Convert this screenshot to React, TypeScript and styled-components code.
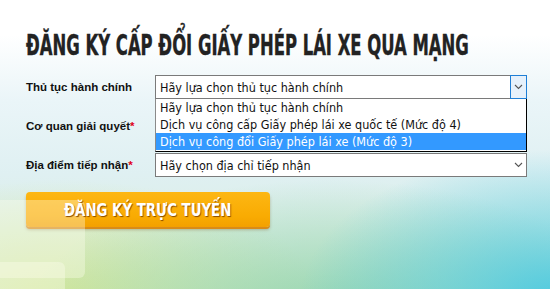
import React from 'react';
import styled, { createGlobalStyle } from 'styled-components';

const GlobalStyle = createGlobalStyle`
    html, body {
        margin: 0;
        padding: 0;
    }
    * {
        box-sizing: border-box;
    }
`;

const Page = styled.main`
    position: relative;
    width: 550px;
    height: 289px;
    overflow: hidden;
    padding: 30px 23px 0 26px;
    font-family: 'Liberation Sans', Arial, sans-serif;
    background:
        radial-gradient(ellipse 260px 150px at 560px 300px, rgba(70, 200, 225, 0.95), rgba(70, 200, 225, 0) 100%),
        radial-gradient(ellipse 300px 130px at 330px 310px, rgba(140, 210, 170, 0.85), rgba(140, 210, 170, 0) 100%),
        radial-gradient(ellipse 260px 120px at 60px 300px, rgba(210, 230, 150, 0.95), rgba(210, 230, 150, 0) 100%),
        linear-gradient(180deg, #ffffff 0%, #ffffff 12%, #eaf5f8 35%, #dff0f2 60%, #d7ecd8 100%);
`;

const Bokeh = styled.span<{ $w: number; $h: number; $x: number; $y: number }>`
    position: absolute;
    left: ${(p) => p.$x}px;
    top: ${(p) => p.$y}px;
    width: ${(p) => p.$w}px;
    height: ${(p) => p.$h}px;
    border-radius: 6px;
    background: rgba(255, 255, 240, 0.35);
`;

const Title = styled.h1`
    margin: 0 0 14px;
    height: 31px;
    font-family: 'DejaVu Sans Condensed', 'DejaVu Sans', sans-serif;
    font-stretch: condensed;
    font-weight: 700;
    font-size: 29px;
    line-height: 31px;
    color: #222;
    white-space: nowrap;
    -webkit-text-stroke: 0.4px #222;
`;

/* the original uses a narrow display face; squeeze the condensed one to fit */
const Squeeze = styled.span<{ $x: number }>`
    display: inline-block;
    transform-origin: left center;
    transform: scaleX(${(p) => p.$x});
`;

const Form = styled.div`
    position: relative;
    z-index: 1;
    display: grid;
    grid-template-columns: 129px 372px;
    row-gap: 15px;
    align-items: center;
`;

const Label = styled.label`
    font-family: 'Liberation Sans', Arial, sans-serif;
    font-weight: 700;
    font-size: 11.5px;
    color: #111;
    white-space: nowrap;

    span {
        color: #e0001b;
    }
`;

const Field = styled.div`
    position: relative;
`;

const SelectBox = styled.div`
    display: flex;
    align-items: center;
    height: 24px;
    background: #fff;
    border: 1px solid #7a7a7a;
    font-family: 'DejaVu Sans Condensed', 'DejaVu Sans', sans-serif;
    font-stretch: condensed;
    font-size: 12.5px;
    color: #111;
`;

const SelectText = styled.div`
    flex: 1;
    padding-left: 4px;
    white-space: nowrap;
`;

const Arrow = styled.div<{ $focused?: boolean }>`
    width: 17px;
    height: 24px;
    margin: -1px -1px -1px 0;
    display: flex;
    align-items: center;
    justify-content: center;
    border: 1px solid ${(p) => (p.$focused ? '#1f7fd6' : 'transparent')};
    background: ${(p) => (p.$focused ? '#e6f1fb' : 'transparent')};
`;

const DropList = styled.ul`
    position: absolute;
    left: 0;
    right: 0;
    top: 24px;
    margin: 0;
    padding: 0 0 1px;
    list-style: none;
    background: #fff;
    border-left: 1px solid #8a8a8a;
    border-right: 1px solid #000;
    border-bottom: 1px solid #000;
    z-index: 5;
    font-family: 'DejaVu Sans Condensed', 'DejaVu Sans', sans-serif;
    font-stretch: condensed;
    font-size: 12.5px;
`;

const Option = styled.li<{ $selected?: boolean }>`
    height: 17px;
    line-height: 17px;
    padding-left: 4px;
    white-space: nowrap;
    color: ${(p) => (p.$selected ? '#fff' : '#111')};
    background: ${(p) => (p.$selected ? '#3399ff' : '#fff')};
`;

const Button = styled.button`
    display: flex;
    align-items: center;
    justify-content: center;
    margin-top: 15px;
    padding: 0;
    width: 244px;
    height: 35px;
    border: 0;
    border-radius: 4px;
    background: linear-gradient(180deg, #fdb713 0%, #f9ab02 70%, #f3a000 100%);
    box-shadow: 0 2px 0 #d88b19, 0 3px 3px rgba(120, 80, 20, 0.35);
    font-family: 'DejaVu Sans Condensed', 'DejaVu Sans', sans-serif;
    font-stretch: condensed;
    font-weight: 700;
    font-size: 18.5px;
    color: #fff;
    text-shadow: 1px 1px 1px #8a4b00;
    cursor: pointer;

    ${Squeeze} {
        transform-origin: center;
    }
`;

const Chevron = () => (
    <svg width="9" height="6" viewBox="0 0 9 6">
        <path d="M1 1 L4.5 4.5 L8 1" fill="none" stroke="#555" strokeWidth="1.1" />
    </svg>
);

const options = [
    'Hãy lựa chọn thủ tục hành chính',
    'Dịch vụ công cấp Giấy phép lái xe quốc tế (Mức độ 4)',
    'Dịch vụ công đổi Giấy phép lái xe (Mức độ 3)',
];

function App() {
    return (
        <Page>
            <GlobalStyle />
            <Bokeh $x={-10} $y={200} $w={95} $h={78} />
            <Bokeh $x={-15} $y={262} $w={80} $h={40} />
            <Title>
                <Squeeze $x={0.63}>ĐĂNG KÝ CẤP ĐỔI GIẤY PHÉP LÁI XE QUA MẠNG</Squeeze>
            </Title>
            <Form>
                <Label>Thủ tục hành chính</Label>
                <Field>
                    <SelectBox>
                        <SelectText>{options[0]}</SelectText>
                        <Arrow $focused>
                            <Chevron />
                        </Arrow>
                    </SelectBox>
                    <DropList>
                        {options.map((o, i) => (
                            <Option key={o} $selected={i === 2}>
                                {o}
                            </Option>
                        ))}
                    </DropList>
                </Field>

                <Label>
                    Cơ quan giải quyết<span>*</span>
                </Label>
                <Field>
                    <SelectBox>
                        <SelectText />
                        <Arrow>
                            <Chevron />
                        </Arrow>
                    </SelectBox>
                </Field>

                <Label>
                    Địa điểm tiếp nhận<span>*</span>
                </Label>
                <Field>
                    <SelectBox>
                        <SelectText>Hãy chọn địa chỉ tiếp nhận</SelectText>
                        <Arrow>
                            <Chevron />
                        </Arrow>
                    </SelectBox>
                </Field>
            </Form>
            <Button>
                <Squeeze $x={0.8}>ĐĂNG KÝ TRỰC TUYẾN</Squeeze>
            </Button>
        </Page>
    );
}

export default App;
